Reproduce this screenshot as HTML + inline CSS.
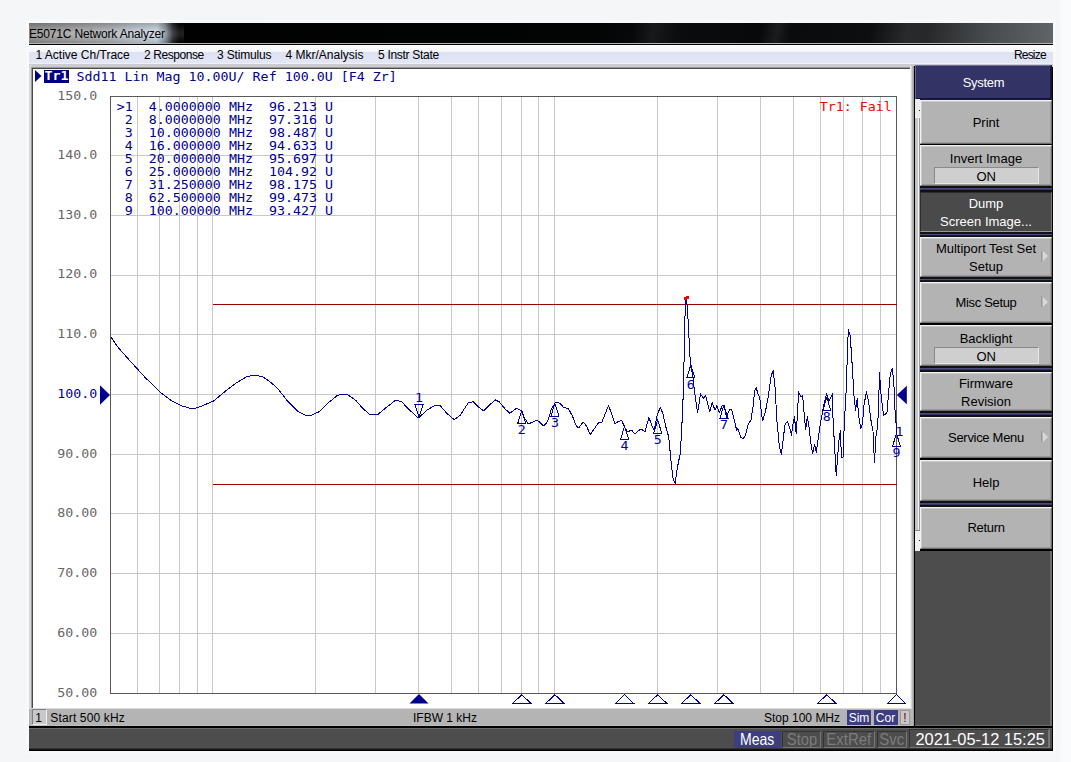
<!DOCTYPE html>
<html lang="en"><head><meta charset="utf-8"><title>E5071C Network Analyzer</title>
<style>
html,body{margin:0;padding:0}
body{width:1071px;height:762px;overflow:hidden;position:relative;background:#f5f6f8;font-family:"Liberation Sans",sans-serif;color:#000}
.abs{position:absolute}
.rstrip{position:absolute;left:1058px;top:0;width:13px;height:762px;background:linear-gradient(90deg,#f5f6f8 0,#f9fafb 4px,#fafbfc 100%)}
.win{position:absolute;left:29px;top:23px;width:1024px;height:728.2px;background:#000;box-shadow:0 0 3px 3px rgba(250,250,250,.8)}
.title{position:absolute;left:0;top:0;width:1024px;height:20px;border-bottom:1px solid #b4b4b4;overflow:hidden;background:linear-gradient(100deg,#000 0,#030404 560px,#07080a 596px,#17191b 616px,#0b0c0e 640px,#08090b 722px,#1a1c1e 738px,#0a0b0d 752px,#0d0e10 830px,#282a2c 866px,#26282a 886px,#484b4d 945px,#676b6d 1026px)}
.title .glow{position:absolute;left:0;top:0;width:155px;height:20px;background:linear-gradient(180deg,rgba(0,0,0,.22) 0,rgba(255,255,255,.12) 45%,rgba(255,255,255,.12) 60%,rgba(0,0,0,.15) 100%),linear-gradient(90deg,#909090 0,#a2a2a2 40px,#aeb2b6 80px,#c2ccd6 108px,#ccd8e4 128px,rgba(190,204,218,.75) 136px,rgba(120,130,140,.3) 144px,rgba(0,0,0,0) 150px);}
.title .txt{position:absolute;left:0px;top:3.7px;font-size:12px;line-height:15px;color:#000;white-space:nowrap;letter-spacing:-0.18px}
.menu{position:absolute;left:0;top:22px;width:1024px;height:19.5px;background:linear-gradient(180deg,#fdfdfe 0,#f4f6fb 35%,#dde1f2 37%,#e3e6f5 88%,#eef0f9 92%,#eef0f9 100%);font-size:12px;line-height:20.6px;white-space:nowrap}
.menu span{position:absolute;top:0}
.plotwin{position:absolute;left:32px;top:68px;width:880px;height:641px;background:#fff;border-left:1px solid #4a4a4a;border-top:1px solid #4a4a4a;box-shadow:-1px -1px 0 #9a9a9a;box-sizing:border-box}
.mono{font-family:"DejaVu Sans Mono","Liberation Mono",monospace}
.sy{transform:scaleY(0.87);transform-origin:left center}
.trtitle{position:absolute;left:76.5px;top:69.5px;font-size:13.3px;line-height:15px;color:#000090;white-space:pre}
.trbox{position:absolute;left:44px;top:70px;width:25px;height:13px;background:#000080;color:#fff;font-weight:bold;font-size:13.3px;line-height:13px;text-align:center;overflow:hidden}
.mrow{position:absolute;left:116.8px;font-size:13.3px;line-height:13px;height:13px;color:#000090;white-space:pre}
svg.chart{position:absolute;left:0;top:0}
svg .mn{font-family:"DejaVu Sans Mono","Liberation Mono",monospace;font-size:13.3px;fill:#0000a0;text-anchor:middle}
svg .yb{fill:#0000a0 !important}
svg .yl{font-family:"DejaVu Sans Mono","Liberation Mono",monospace;font-size:13.3px;fill:#666;text-anchor:end}
.fail{position:absolute;left:819.8px;top:99.9px;font-size:13.3px;line-height:15px;color:#ff0000;white-space:pre}
.chbar{position:absolute;left:31px;top:709px;width:881px;height:17.5px;background:#b4b4b4;font-size:12px;line-height:18.4px;white-space:nowrap;box-shadow:0 -1px 0 #dcdcdc,-2px 0 0 #b4b4b4,inset 0 -1.3px 0 #d6d6d6}
.chbar span{position:absolute;top:0}
.tag{background:#3d3d80;color:#fff;text-align:center;height:15px;line-height:16.2px;top:1px!important;font-size:12px}
.sbar{position:absolute;left:29px;top:728px;width:1024px;height:23px;background:linear-gradient(180deg,#6a6a6a 0,#6a6a6a 1.4px,#4d4d4d 1.4px,#4d4d4d 20px,#333 20.5px,#2a2a2a 21.4px,#000 21.6px,#000 23px);box-sizing:border-box;border-right:1px solid #000}
.sb{position:absolute;top:2.5px;height:17px;line-height:15px;font-size:16.5px;text-align:center;box-sizing:border-box;border:1px solid #333;border-right-color:#777;border-bottom-color:#777;color:#7c7c7c;white-space:nowrap}
.sb b{display:inline-block;font-weight:normal;transform-origin:center center}
.side{position:absolute;left:915px;top:550.5px;width:137px;height:175.9px;background:#4d4d4d;box-sizing:border-box;border-right:2px solid #6c6c6c;border-bottom:1.6px solid #6c6c6c}
.hdr{position:absolute;left:915px;top:65px;width:137px;height:34.5px;box-sizing:border-box;background:#333366;border-top:1px solid #6a6a9c;border-left:1px solid #6a6a9c;border-right:2px solid #15153a;border-bottom:2px solid #15153a;color:#fff;font-size:13px;line-height:34px;text-align:center;letter-spacing:-0.3px;text-indent:1px}
.btn{position:absolute;left:920px;width:132px;box-sizing:border-box;background:#b3b3b3;border-top:1px solid #f2f2f2;border-left:1px solid #f2f2f2;border-right:1px solid #6e6e6e;border-bottom:1px solid #6e6e6e;box-shadow:inset 1px 1px 0 #c9c9c9,inset -1px -1px 0 #9a9a9a;font-size:13px;text-align:center}
.btn .ln{position:absolute;left:-1px;width:132px;height:16px;line-height:16px;white-space:nowrap}
.btn.sel{background:#4a4a4a;color:#fff;border-color:#2c2c2c #777 #999 #2c2c2c;box-shadow:none}
.btn .on{position:absolute;left:13px;width:104.5px;height:17px;line-height:17px;background:#cfcfcf;border:1px solid #8a8a8a;border-right-color:#e8e8e8;border-bottom-color:#e8e8e8;box-sizing:border-box}

.arr{position:absolute;right:3.5px;top:50%;margin-top:-6px;width:0;height:0;border-left:5.5px solid #d8d8d8;border-top:5.5px solid transparent;border-bottom:5.5px solid transparent}
.arr:before{content:"";position:absolute;left:-6.5px;top:-5.5px;width:1px;height:11px;background:#999}
.sep{position:absolute;left:920px;width:132px;background:linear-gradient(180deg,#111 0,#111 30%,#5a5a98 45%,#333366 60%,#111 72%,#111 100%)}
.scroll{position:absolute;left:915px;top:99px;width:5px;height:451.5px;background:linear-gradient(180deg,#ececec 0,#ececec 19px,#b3b3b3 19px,#b3b3b3 431px,#f0f0f0 431px,#f0f0f0 100%)}
.scroll i{position:absolute;left:0;top:18.5px;width:5px;height:412.5px;background:linear-gradient(90deg,#c4c4c8 0,#c4c4c8 3px,#f4f4f4 3px,#f4f4f4 4.2px,#999 4.2px,#999 5px);box-shadow:0 -1px 0 #f4f4f4,0 1px 0 #888}
.scroll b{position:absolute;left:3.8px;width:1px;height:1px;background:#222}
</style></head><body>
<div class="rstrip"></div>
<div class="win">
  <div class="title"><div class="glow"></div><div class="txt">E5071C Network Analyzer</div></div>
  <div class="menu">
    <span style="left:6.5px">1 Active Ch/Trace</span>
    <span style="left:115px;letter-spacing:-0.42px">2 Response</span>
    <span style="left:188px;letter-spacing:-0.16px">3 Stimulus</span>
    <span style="left:256.5px">4 Mkr/Analysis</span>
    <span style="left:349px;letter-spacing:-0.3px">5 Instr State</span>
    <span style="right:7.2px;letter-spacing:-0.8px">Resize</span>
  </div>
</div>
<div class="abs" style="left:29px;top:64.3px;width:1024px;height:3px;background:#cbcbd0"></div>
<div class="abs" style="left:29px;top:64.5px;width:3px;height:662px;background:#d9d9d9"></div>
<div class="plotwin"></div>
<div class="abs" style="left:910px;top:66px;width:5px;height:660.5px;background:linear-gradient(90deg,#fff 0,#e4e4e4 1px,#b8b8b8 2.4px,#a0a0a0 3.6px,#000 3.7px,#000 5px)"></div>
<svg class="chart" width="1071" height="762" viewBox="0 0 1071 762" shape-rendering="crispEdges">
<line x1="137.5" y1="96.5" x2="137.5" y2="693.5" stroke="#c8c8c8" stroke-width="1"/>
<line x1="159.5" y1="96.5" x2="159.5" y2="693.5" stroke="#c8c8c8" stroke-width="1"/>
<line x1="179.5" y1="96.5" x2="179.5" y2="693.5" stroke="#c8c8c8" stroke-width="1"/>
<line x1="197.5" y1="96.5" x2="197.5" y2="693.5" stroke="#c8c8c8" stroke-width="1"/>
<line x1="212.5" y1="96.5" x2="212.5" y2="693.5" stroke="#c8c8c8" stroke-width="1"/>
<line x1="315.5" y1="96.5" x2="315.5" y2="693.5" stroke="#c8c8c8" stroke-width="1"/>
<line x1="375.5" y1="96.5" x2="375.5" y2="693.5" stroke="#c8c8c8" stroke-width="1"/>
<line x1="418.5" y1="96.5" x2="418.5" y2="693.5" stroke="#c8c8c8" stroke-width="1"/>
<line x1="451.5" y1="96.5" x2="451.5" y2="693.5" stroke="#c8c8c8" stroke-width="1"/>
<line x1="478.5" y1="96.5" x2="478.5" y2="693.5" stroke="#c8c8c8" stroke-width="1"/>
<line x1="501.5" y1="96.5" x2="501.5" y2="693.5" stroke="#c8c8c8" stroke-width="1"/>
<line x1="521.5" y1="96.5" x2="521.5" y2="693.5" stroke="#c8c8c8" stroke-width="1"/>
<line x1="538.5" y1="96.5" x2="538.5" y2="693.5" stroke="#c8c8c8" stroke-width="1"/>
<line x1="554.5" y1="96.5" x2="554.5" y2="693.5" stroke="#c8c8c8" stroke-width="1"/>
<line x1="657.5" y1="96.5" x2="657.5" y2="693.5" stroke="#c8c8c8" stroke-width="1"/>
<line x1="717.5" y1="96.5" x2="717.5" y2="693.5" stroke="#c8c8c8" stroke-width="1"/>
<line x1="760.5" y1="96.5" x2="760.5" y2="693.5" stroke="#c8c8c8" stroke-width="1"/>
<line x1="793.5" y1="96.5" x2="793.5" y2="693.5" stroke="#c8c8c8" stroke-width="1"/>
<line x1="820.5" y1="96.5" x2="820.5" y2="693.5" stroke="#c8c8c8" stroke-width="1"/>
<line x1="843.5" y1="96.5" x2="843.5" y2="693.5" stroke="#c8c8c8" stroke-width="1"/>
<line x1="862.5" y1="96.5" x2="862.5" y2="693.5" stroke="#c8c8c8" stroke-width="1"/>
<line x1="880.5" y1="96.5" x2="880.5" y2="693.5" stroke="#c8c8c8" stroke-width="1"/>
<line x1="110.5" y1="633.5" x2="896.5" y2="633.5" stroke="#c8c8c8" stroke-width="1"/>
<line x1="110.5" y1="573.5" x2="896.5" y2="573.5" stroke="#c8c8c8" stroke-width="1"/>
<line x1="110.5" y1="513.5" x2="896.5" y2="513.5" stroke="#c8c8c8" stroke-width="1"/>
<line x1="110.5" y1="454.5" x2="896.5" y2="454.5" stroke="#c8c8c8" stroke-width="1"/>
<line x1="110.5" y1="394.5" x2="896.5" y2="394.5" stroke="#c8c8c8" stroke-width="1"/>
<line x1="110.5" y1="334.5" x2="896.5" y2="334.5" stroke="#c8c8c8" stroke-width="1"/>
<line x1="110.5" y1="275.5" x2="896.5" y2="275.5" stroke="#c8c8c8" stroke-width="1"/>
<line x1="110.5" y1="215.5" x2="896.5" y2="215.5" stroke="#c8c8c8" stroke-width="1"/>
<line x1="110.5" y1="155.5" x2="896.5" y2="155.5" stroke="#c8c8c8" stroke-width="1"/>
<rect x="110.5" y="96.5" width="786.0" height="597.0" fill="none" stroke="#5a5a5a" stroke-width="1"/>
<line x1="213" y1="304.5" x2="896.5" y2="304.5" stroke="#990000" stroke-width="1"/>
<line x1="213" y1="484.5" x2="896.5" y2="484.5" stroke="#990000" stroke-width="1"/>
<polyline points="110.8,336.8 117.9,347.2 129.9,360.7 144.8,377.1 159.8,392.0 171.7,401.0 180.7,405.5 189.6,408.2 195.6,408.2 203.1,405.5 213.5,401.0 225.5,391.1 237.4,382.2 246.4,376.8 253.9,375.0 262.8,376.8 271.8,383.1 279.3,390.5 288.2,401.9 297.2,410.9 306.1,415.6 312.1,415.0 319.6,411.5 328.6,402.5 337.5,395.3 343.5,394.1 348.0,395.0 355.5,400.1 362.9,408.5 370.4,415.0 377.9,414.4 386.8,407.0 395.8,400.1 401.8,401.9 407.8,408.4 418.3,418.0 427.5,409.7 435.3,405.2 440.5,406.0 447.1,413.6 454.1,419.6 460.1,415.4 468.5,402.4 473.2,401.8 478.4,407.1 483.7,410.7 490.2,404.4 495.4,400.0 499.3,401.8 504.6,408.4 509.8,413.3 516.3,408.4 520.8,410.2 525.0,418.8 528.1,423.5 532.0,422.7 536.5,420.1 539.9,422.2 543.8,426.1 547.7,421.4 551.6,408.4 555.6,402.4 559.5,403.1 563.4,407.1 568.6,408.9 572.5,416.2 576.5,426.7 579.1,427.5 583.0,422.0 586.1,425.4 590.3,434.5 594.8,428.0 598.7,422.7 601.8,422.2 605.2,413.6 608.4,405.8 611.2,412.3 614.9,424.1 618.3,421.4 621.7,420.7 624.8,427.5 627.5,431.9 631.4,430.1 635.3,434.0 639.2,430.1 641.8,429.3 645.0,431.9 648.9,417.5 652.3,426.7 654.1,430.1 657.5,414.0 660.4,407.3 663.0,414.2 665.9,427.2 668.8,437.3 670.8,459.0 673.1,479.2 675.1,483.5 677.4,467.6 680.3,453.2 681.8,427.2 683.2,395.5 684.1,357.9 684.9,317.5 686.1,297.9 687.5,308.9 689.0,337.7 690.4,363.7 692.7,375.3 694.7,392.6 697.6,412.8 700.5,394.0 703.4,398.4 705.7,395.5 707.7,404.1 709.8,411.3 712.1,402.7 715.0,409.9 717.0,405.6 719.3,412.8 722.2,405.6 724.5,407.0 726.5,417.1 729.4,409.9 731.7,409.9 734.3,420.0 736.6,430.1 738.0,428.7 740.9,437.3 743.2,438.8 745.3,435.9 748.2,424.3 751.0,420.0 753.4,404.1 754.5,391.1 756.2,387.4 758.3,395.5 759.7,396.9 761.1,409.9 762.6,420.9 765.5,411.3 768.4,395.5 771.2,375.3 773.3,370.9 775.0,386.8 777.0,421.5 779.3,446.0 781.4,454.7 783.4,437.3 785.1,424.3 787.3,421.4 789.7,427.4 791.5,435.3 793.1,423.5 794.4,416.9 796.3,434.0 797.6,410.3 798.6,391.9 801.0,397.2 802.6,395.1 804.1,413.0 805.7,430.0 807.3,416.9 808.9,426.1 810.7,441.8 812.6,453.7 814.7,444.0 816.2,452.4 818.1,439.2 820.4,423.5 823.8,405.1 826.5,394.0 829.1,401.1 832.5,394.0 833.0,418.2 834.9,452.4 836.2,475.5 837.8,455.0 838.8,441.8 840.4,430.0 841.4,457.6 843.0,457.6 844.3,423.5 846.2,389.3 847.2,360.4 848.3,329.4 850.1,335.5 851.4,352.5 852.7,373.5 854.1,397.2 855.6,410.3 857.2,398.5 858.8,416.9 860.9,428.7 862.5,423.5 864.0,405.1 866.4,391.9 868.5,401.1 870.6,418.2 873.0,431.3 874.5,462.9 875.9,436.6 877.7,426.1 878.8,397.2 879.5,373.0 880.8,391.9 883.5,415.6 886.9,413.0 888.7,391.9 890.3,373.5 892.4,368.3 894.0,386.7 895.0,410.3 896.1,423.5 896.5,433.6" fill="none" stroke="#0000a0" stroke-width="1" shape-rendering="crispEdges" stroke-linejoin="round"/>
<rect x="684" y="297" width="3" height="3" fill="#ff0000"/><rect x="686" y="296" width="3" height="3" fill="#ff0000"/>
<polygon points="100,385.3 110,395.0 100,404.7" fill="#000090" shape-rendering="auto"/>
<polygon points="906.8,385.7 896.8,395.0 906.8,404.3" fill="#000090" shape-rendering="auto"/>
<polygon points="419.0,694 409.5,703.5 428.5,703.5" fill="#000090" shape-rendering="auto"/>
<polygon points="521.8,694.7 513.1,703 530.5,703" fill="#fff" stroke="#0000a0" stroke-width="1" shape-rendering="crispEdges"/>
<polygon points="554.9,694.7 546.2,703 563.6,703" fill="#fff" stroke="#0000a0" stroke-width="1" shape-rendering="crispEdges"/>
<polygon points="624.6,694.7 615.9,703 633.3,703" fill="#fff" stroke="#0000a0" stroke-width="1" shape-rendering="crispEdges"/>
<polygon points="657.7,694.7 649.0,703 666.4,703" fill="#fff" stroke="#0000a0" stroke-width="1" shape-rendering="crispEdges"/>
<polygon points="690.8,694.7 682.1,703 699.5,703" fill="#fff" stroke="#0000a0" stroke-width="1" shape-rendering="crispEdges"/>
<polygon points="723.9,694.7 715.2,703 732.6,703" fill="#fff" stroke="#0000a0" stroke-width="1" shape-rendering="crispEdges"/>
<polygon points="826.8,694.7 818.1,703 835.5,703" fill="#fff" stroke="#0000a0" stroke-width="1" shape-rendering="crispEdges"/>
<polygon points="896.5,694.7 887.8,703 905.2,703" fill="#fff" stroke="#0000a0" stroke-width="1" shape-rendering="crispEdges"/>
<polygon points="419.0,417.6 415.0,404.6 423.0,404.6" fill="none" stroke="#0000a0" stroke-width="1" shape-rendering="crispEdges"/>
<text transform="translate(419.0,401.6) scale(1,0.87)" class="mn">1</text>
<polygon points="521.8,410.3 517.8,423.3 525.8,423.3" fill="none" stroke="#0000a0" stroke-width="1" shape-rendering="crispEdges"/>
<text transform="translate(521.8,434.2) scale(1,0.87)" class="mn">2</text>
<polygon points="554.9,403.3 550.9,416.3 558.9,416.3" fill="none" stroke="#0000a0" stroke-width="1" shape-rendering="crispEdges"/>
<text transform="translate(554.9,427.2) scale(1,0.87)" class="mn">3</text>
<polygon points="624.6,426.3 620.6,439.3 628.6,439.3" fill="none" stroke="#0000a0" stroke-width="1" shape-rendering="crispEdges"/>
<text transform="translate(624.6,450.2) scale(1,0.87)" class="mn">4</text>
<polygon points="657.7,420.0 653.7,433.0 661.7,433.0" fill="none" stroke="#0000a0" stroke-width="1" shape-rendering="crispEdges"/>
<text transform="translate(657.7,443.9) scale(1,0.87)" class="mn">5</text>
<polygon points="690.8,364.9 686.8,377.9 694.8,377.9" fill="none" stroke="#0000a0" stroke-width="1" shape-rendering="crispEdges"/>
<text transform="translate(690.8,388.8) scale(1,0.87)" class="mn">6</text>
<polygon points="723.9,405.2 719.9,418.2 727.9,418.2" fill="none" stroke="#0000a0" stroke-width="1" shape-rendering="crispEdges"/>
<text transform="translate(723.9,429.1) scale(1,0.87)" class="mn">7</text>
<polygon points="826.8,397.4 822.8,410.4 830.8,410.4" fill="none" stroke="#0000a0" stroke-width="1" shape-rendering="crispEdges"/>
<text transform="translate(826.8,421.3) scale(1,0.87)" class="mn">8</text>
<polygon points="896.5,433.5 892.5,446.5 900.5,446.5" fill="none" stroke="#0000a0" stroke-width="1" shape-rendering="crispEdges"/>
<text transform="translate(896.5,457.4) scale(1,0.87)" class="mn">9</text>
<text transform="translate(899.5,436.3) scale(1,0.87)" class="mn">1</text>
<text transform="translate(97.3,697.1) scale(1,0.87)" class="yl">50.00</text>
<text transform="translate(97.3,636.6) scale(1,0.87)" class="yl">60.00</text>
<text transform="translate(97.3,576.9) scale(1,0.87)" class="yl">70.00</text>
<text transform="translate(97.3,517.2) scale(1,0.87)" class="yl">80.00</text>
<text transform="translate(97.3,457.5) scale(1,0.87)" class="yl">90.00</text>
<text transform="translate(97.3,397.8) scale(1,0.87)" class="yl yb">100.0</text>
<text transform="translate(97.3,338.1) scale(1,0.87)" class="yl">110.0</text>
<text transform="translate(97.3,278.4) scale(1,0.87)" class="yl">120.0</text>
<text transform="translate(97.3,218.7) scale(1,0.87)" class="yl">130.0</text>
<text transform="translate(97.3,159.0) scale(1,0.87)" class="yl">140.0</text>
<text transform="translate(97.3,100.3) scale(1,0.87)" class="yl">150.0</text>
</svg>
<svg class="abs" style="left:35px;top:70px" width="7" height="12"><polygon points="0,0 6.5,6 0,12" fill="#000080"/></svg>
<div class="trbox mono"><span class="sy" style="display:block">Tr1</span></div>
<div class="trtitle mono sy">Sdd11 Lin Mag 10.00U/ Ref 100.0U [F4 Zr]</div>
<div class="mono">
<div class="mrow sy" style="top:100.9px"><span>>1</span>  <span>4.0000000</span> MHz  <span>96.213</span> U</div>
<div class="mrow sy" style="top:113.9px"><span> 2</span>  <span>8.0000000</span> MHz  <span>97.316</span> U</div>
<div class="mrow sy" style="top:126.9px"><span> 3</span>  <span>10.000000</span> MHz  <span>98.487</span> U</div>
<div class="mrow sy" style="top:139.9px"><span> 4</span>  <span>16.000000</span> MHz  <span>94.633</span> U</div>
<div class="mrow sy" style="top:152.9px"><span> 5</span>  <span>20.000000</span> MHz  <span>95.697</span> U</div>
<div class="mrow sy" style="top:165.9px"><span> 6</span>  <span>25.000000</span> MHz  <span>104.92</span> U</div>
<div class="mrow sy" style="top:178.9px"><span> 7</span>  <span>31.250000</span> MHz  <span>98.175</span> U</div>
<div class="mrow sy" style="top:191.9px"><span> 8</span>  <span>62.500000</span> MHz  <span>99.473</span> U</div>
<div class="mrow sy" style="top:204.9px"><span> 9</span>  <span>100.00000</span> MHz  <span>93.427</span> U</div>
</div>
<div class="fail mono sy">Tr1: Fail</div>
<div class="chbar">
  <span style="left:0.5px;top:0;width:15px;height:15.5px;line-height:16px;text-align:center;background:#c8c8c8;border:1px solid #808080;border-right-color:#f0f0f0;border-bottom-color:#f0f0f0;box-sizing:border-box;font-size:12px;text-indent:-1px">1</span>
  <span style="left:19.3px;letter-spacing:0.15px">Start 500 kHz</span>
  <span style="left:382px">IFBW 1 kHz</span>
  <span style="left:733px">Stop 100 MHz</span>
  <span class="tag" style="left:816px;width:24px">Sim</span>
  <span class="tag" style="left:842.5px;width:24px">Cor</span>
  <span style="left:869px;top:1px;width:10px;height:15px;line-height:15px;text-align:center;background:#c8c8c8;border:1px solid #999;box-sizing:border-box;color:#700018">!</span>
</div>
<div class="abs" style="left:29px;top:726.3px;width:1024px;height:1.8px;background:#000"></div>
<div class="side"></div>
<div class="hdr">System</div>
<div class="scroll"><i></i><b style="top:11px"></b><b style="top:441px"></b></div>
<div class="btn " style="top:100px;height:44px"><div class="ln" style="top:13.8px">Print</div></div>
<div class="btn " style="top:145px;height:41px"><div class="ln" style="top:4.9px">Invert Image</div><div class="on" style="top:21.0px">ON</div></div>
<div class="sep" style="top:186px;height:6px"></div>
<div class="btn sel" style="top:192px;height:40px"><div class="ln" style="top:3.4px">Dump</div><div class="ln" style="top:21.3px">Screen Image...</div></div>
<div class="sep" style="top:232px;height:5px"></div>
<div class="btn " style="top:237px;height:40px"><div class="ln" style="top:2.8px">Multiport Test Set</div><div class="ln" style="top:21.0px">Setup</div><i class="arr"></i></div>
<div class="sep" style="top:277px;height:5px"></div>
<div class="btn " style="top:282px;height:41px"><div class="ln" style="top:11.5px"><span style="letter-spacing:-0.33px">Misc Setup</span></div><i class="arr"></i></div>
<div class="btn " style="top:325px;height:41px"><div class="ln" style="top:4.7px">Backlight</div><div class="on" style="top:21.4px">ON</div></div>
<div class="sep" style="top:366px;height:6px"></div>
<div class="btn " style="top:372px;height:39px"><div class="ln" style="top:3.1px">Firmware</div><div class="ln" style="top:20.9px">Revision</div></div>
<div class="sep" style="top:411px;height:6px"></div>
<div class="btn " style="top:417px;height:41px"><div class="ln" style="top:11.7px"><span style="letter-spacing:-0.3px">Service Menu</span></div><i class="arr"></i></div>
<div class="btn " style="top:460px;height:41px"><div class="ln" style="top:14.1px">Help</div></div>
<div class="sep" style="top:501px;height:6px"></div>
<div class="btn " style="top:507px;height:42px"><div class="ln" style="top:12.2px"><span style="letter-spacing:-0.3px">Return</span></div></div>
<div class="sbar">
  <div class="sb" style="left:704.5px;width:47px;background:#3d3d80;color:#fff;border-color:#3d3d80"><b style="transform:scaleX(.852)">Meas</b></div>
  <div class="sb" style="left:753px;width:39px"><b style="transform:scaleX(.89)">Stop</b></div>
  <div class="sb" style="left:794px;width:52px"><b style="transform:scaleX(.906)">ExtRef</b></div>
  <div class="sb" style="left:848px;width:30px"><b style="transform:scaleX(.905)">Svc</b></div>
  <div class="sb" style="left:880px;width:141px;color:#fff;top:0.6px;height:19.6px;line-height:18.8px;border-width:1px 2px 1.4px 1px"><b style="transform:scaleX(.994);position:relative;left:1.4px">2021-05-12 15:25</b></div>
</div>
</body></html>
